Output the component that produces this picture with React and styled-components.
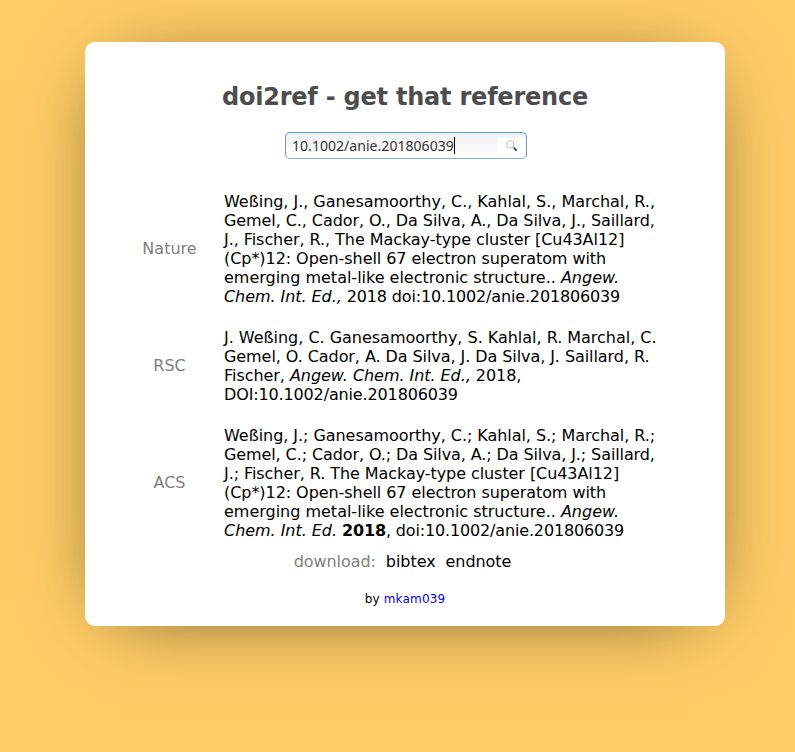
import React from "react";
import styled, { createGlobalStyle } from "styled-components";

const GlobalStyle = createGlobalStyle`
  body {
    margin: 0;
    background: #ffcc66;
    font-family: "DejaVu Sans", sans-serif;
    font-size: 16px;
    color: #000;
  }
`;

const Page = styled.div`
  display: flex;
  justify-content: center;
  height: 752px;
  padding: 42px 0 0 15px;
  box-sizing: border-box;
  overflow: hidden;
`;

const Card = styled.main`
  box-sizing: border-box;
  width: 640px;
  height: 584px;
  padding-top: 41px;
  display: flex;
  flex-direction: column;
  align-items: center;
  background: #fff;
  border-radius: 10px;
  box-shadow: 0 8px 80px -30px rgba(0, 0, 0, 0.72);
`;

const Title = styled.h1`
  margin: 0;
  font-size: 24px;
  line-height: 28px;
  letter-spacing: -0.22px;
  color: #4d4d4d;
`;

const SearchBox = styled.div`
  box-sizing: border-box;
  display: flex;
  align-items: center;
  width: 242px;
  height: 27px;
  margin: 21px 0 0 2px;
  padding: 0 0 0 6px;
  border: 1px solid #5a9fd4;
  border-bottom-color: #7fb5e0;
  border-radius: 5px;
  background: linear-gradient(#f1f1f1, #fff);
  font: 14px/20px "Noto Sans", sans-serif;
  letter-spacing: 0.045px;
  color: #333;
`;

const Caret = styled.span`
  width: 1px;
  height: 17px;
  background: #000;
`;

const SearchButton = styled.span`
  display: flex;
  align-items: center;
  box-sizing: border-box;
  width: 28px;
  height: 15px;
  margin-left: auto;
  padding-left: 7px;
  background: #fff;
`;

const References = styled.dl`
  display: grid;
  grid-template-columns: 55px 444px;
  column-gap: 27px;
  row-gap: 22px;
  align-items: center;
  margin: 33px 0 0 0;
  line-height: 19px;
`;

const Style = styled.dt`
  color: gray;
  text-align: center;
  padding-bottom: 1px;
`;

const Citation = styled.dd`
  margin: 0;
  white-space: nowrap;
`;

const Line = styled.div`
  letter-spacing: ${({ $tracking }) => $tracking}px;
`;

const Downloads = styled.div`
  display: flex;
  gap: 10px;
  margin: 12px 0 0 -5px;
  line-height: 19px;
  letter-spacing: -0.06px;
`;

const Label = styled.span`
  color: gray;
`;

const Footer = styled.footer`
  margin-top: 21px;
  font-size: 12px;
  line-height: 15px;
  letter-spacing: 0.17px;
`;

const Author = styled.a`
  color: #0000ee;
`;

export default function App() {
  return (
    <>
      <GlobalStyle />
      <Page>
        <Card>
          <Title>doi2ref - get that reference</Title>
          <SearchBox>
            <span>10.1002/anie.201806039</span>
            <Caret />
            <SearchButton>
              <svg width="13" height="13" viewBox="0 0 13 13">
                <path d="M8 8l1 1" stroke="#a98" strokeWidth="1.5" />
                <path d="M9.5 9.5l1.5 1.5" stroke="#444" strokeWidth="2" strokeLinecap="round" />
                <circle cx="5.3" cy="5.3" r="3.7" fill="#f2f6f8" stroke="#c0c5c8" />
              </svg>
            </SearchButton>
          </SearchBox>
          <References>
            <Style>Nature</Style>
            <Citation>
              <Line $tracking={-0.03}>Weßing, J., Ganesamoorthy, C., Kahlal, S., Marchal, R.,</Line>
              <Line $tracking={-0.08}>Gemel, C., Cador, O., Da Silva, A., Da Silva, J., Saillard,</Line>
              <Line $tracking={-0.06}>J., Fischer, R., The Mackay-type cluster [Cu43Al12]</Line>
              <Line $tracking={-0.06}>(Cp*)12: Open-shell 67 electron superatom with</Line>
              <Line $tracking={-0.01}>emerging metal-like electronic structure.. <i>Angew.</i></Line>
              <Line $tracking={-0.15}><Line as="i" $tracking={-0.06}>Chem. Int. Ed.,</Line> 2018 doi:10.1002/anie.201806039</Line>
            </Citation>
            <Style>RSC</Style>
            <Citation>
              <Line $tracking={-0.02}>J. Weßing, C. Ganesamoorthy, S. Kahlal, R. Marchal, C.</Line>
              <Line $tracking={-0.07}>Gemel, O. Cador, A. Da Silva, J. Da Silva, J. Saillard, R.</Line>
              <Line $tracking={-0.05}>Fischer, <i>Angew. Chem. Int. Ed.,</i> 2018,</Line>
              <Line $tracking={-0.14}>DOI:10.1002/anie.201806039</Line>
            </Citation>
            <Style>ACS</Style>
            <Citation>
              <Line $tracking={-0.05}>Weßing, J.; Ganesamoorthy, C.; Kahlal, S.; Marchal, R.;</Line>
              <Line $tracking={-0.1}>Gemel, C.; Cador, O.; Da Silva, A.; Da Silva, J.; Saillard,</Line>
              <Line $tracking={-0.07}>J.; Fischer, R. The Mackay-type cluster [Cu43Al12]</Line>
              <Line $tracking={-0.06}>(Cp*)12: Open-shell 67 electron superatom with</Line>
              <Line $tracking={-0.01}>emerging metal-like electronic structure.. <i>Angew.</i></Line>
              <Line $tracking={-0.15}><Line as="i" $tracking={-0.04}>Chem. Int. Ed.</Line> <b>2018</b>, doi:10.1002/anie.201806039</Line>
            </Citation>
          </References>
          <Downloads>
            <Label>download:</Label>
            <span>bibtex</span>
            <span>endnote</span>
          </Downloads>
          <Footer>
            by <Author>mkam039</Author>
          </Footer>
        </Card>
      </Page>
    </>
  );
}
